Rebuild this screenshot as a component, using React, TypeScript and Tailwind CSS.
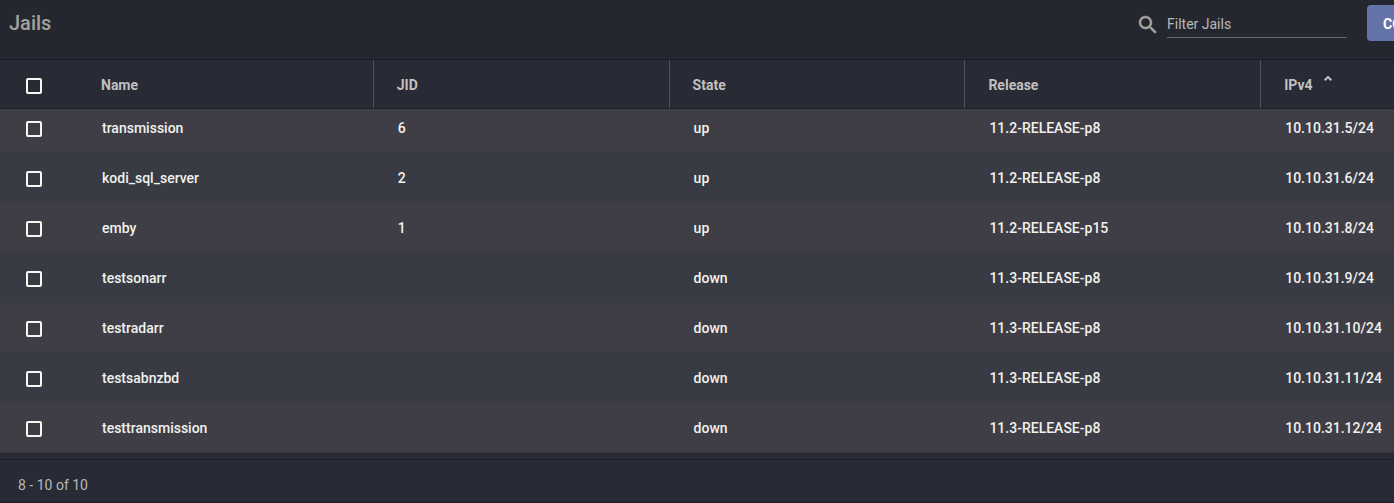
import React from "react";

type Jail = {
  name: string;
  jid?: number;
  state: "up" | "down";
  release: string;
  ipv4: string;
};

const jails: Jail[] = [
  { name: "transmission", jid: 6, state: "up", release: "11.2-RELEASE-p8", ipv4: "10.10.31.5/24" },
  { name: "kodi_sql_server", jid: 2, state: "up", release: "11.2-RELEASE-p8", ipv4: "10.10.31.6/24" },
  { name: "emby", jid: 1, state: "up", release: "11.2-RELEASE-p15", ipv4: "10.10.31.8/24" },
  { name: "testsonarr", state: "down", release: "11.3-RELEASE-p8", ipv4: "10.10.31.9/24" },
  { name: "testradarr", state: "down", release: "11.3-RELEASE-p8", ipv4: "10.10.31.10/24" },
  { name: "testsabnzbd", state: "down", release: "11.3-RELEASE-p8", ipv4: "10.10.31.11/24" },
  { name: "testtransmission", state: "down", release: "11.3-RELEASE-p8", ipv4: "10.10.31.12/24" },
];

export default function App() {
  return (
    <div className="min-h-screen overflow-hidden bg-[#282a35] font-['Roboto',sans-serif] text-sm leading-[18px] text-[#f1f1ec]">
      <Toolbar />

      <table className="w-full table-fixed border-collapse text-left font-medium">
        <colgroup>
          <col className="w-[78px]" />
          <col className="w-[21.22%]" />
          <col className="w-[21.22%]" />
          <col className="w-[21.22%]" />
          <col className="w-[21.22%]" />
          <col />
        </colgroup>
        <thead className="text-[#c1c1bf]">
          <tr className="h-[49px] shadow-[inset_0_-1px_0_#22232c]">
            <th className="pt-0.5 pl-[26px]">
              <Checkbox label="Select all jails" />
            </th>
            <HeaderCell divider>Name</HeaderCell>
            <HeaderCell divider>JID</HeaderCell>
            <HeaderCell divider>State</HeaderCell>
            <HeaderCell divider>Release</HeaderCell>
            <HeaderCell>
              <button className="flex font-bold">
                IPv4
                <svg viewBox="0 0 8 5" className="ml-[11px] h-[5px] w-2" fill="none" stroke="currentColor" strokeWidth="2">
                  <path d="M.7 4.3 4 1l3.3 3.3" />
                </svg>
              </button>
            </HeaderCell>
          </tr>
        </thead>
        <tbody>
          {jails.map((jail) => (
            <tr
              key={jail.name}
              className="h-[50px] shadow-[inset_0_-1px_0_#373840] first:h-11 odd:bg-[#3f3e47] even:bg-[#393b44]"
            >
              <td className="pb-4 pl-[26px] align-bottom">
                <Checkbox label={`Select ${jail.name}`} />
              </td>
              <BodyCell>{jail.name}</BodyCell>
              <BodyCell>{jail.jid}</BodyCell>
              <BodyCell>{jail.state}</BodyCell>
              <BodyCell>{jail.release}</BodyCell>
              <BodyCell>{jail.ipv4}</BodyCell>
            </tr>
          ))}
        </tbody>
      </table>

      <footer className="mt-1.5 h-11 border-y border-[#191b25] px-[18px] pt-4 text-[#b9b9b8]">8 - 10 of 10</footer>
    </div>
  );
}

const Toolbar = () => (
  <header className="h-[60px] overflow-hidden border-b border-[#191b25] bg-[#252730]">
    {/* Runs past the right edge, so the last button is cut off */}
    <div className="flex w-[calc(100%+77px)] items-start pt-[5px]">
      <h1 className="flex-1 pt-1.5 pl-[9px] text-xl leading-6 font-medium text-[#a3a39d]">Jails</h1>
      <svg viewBox="0 0 24 24" className="mt-2 mr-[7px] h-6 w-6 shrink-0" fill="#a7a79f" stroke="#a7a79f" strokeWidth=".4">
        <path d="M15.5 14h-.79l-.28-.27C15.41 12.59 16 11.11 16 9.5 16 5.91 13.09 3 9.5 3S3 5.91 3 9.5 5.91 16 9.5 16c1.61 0 3.09-.59 4.23-1.57l.27.28v.79l5 4.99L20.49 19l-4.99-5zm-6 0C7.01 14 5 11.99 5 9.5S7.01 5 9.5 5 14 7.01 14 9.5 11.99 14 9.5 14z" />
      </svg>
      <input
        type="text"
        aria-label="Filter Jails"
        placeholder="Filter Jails"
        className="mr-5 h-[33px] w-[180px] shrink-0 border-b border-[#656771] bg-transparent pt-1.5 text-sm outline-none placeholder:text-[#b9b9b5]"
      />
      <button className="h-9 w-[104px] shrink-0 rounded bg-[#6574a8] pt-0.5 pl-4 text-left font-bold text-white">COLUMNS</button>
    </div>
  </header>
);

const Checkbox = ({ label }: { label: string }) => (
  <input
    type="checkbox"
    aria-label={label}
    className="block h-4 w-4 appearance-none rounded-xs border-2 border-[#f8f8f2] checked:bg-[#6574a8]"
  />
);

const HeaderCell = ({ children, divider = false }: { children: React.ReactNode; divider?: boolean }) => (
  <th className="h-[49px] p-0 font-bold">
    <div className={divider ? "mb-px h-12 border-r border-[#50515b] pt-4 pl-[23px]" : "mb-px h-12 pt-4 pl-[23px]"}>
      {children}
    </div>
  </th>
);

const BodyCell = ({ children }: { children?: React.ReactNode }) => (
  <td className="pb-4 pl-6 align-bottom whitespace-nowrap">{children}</td>
);
